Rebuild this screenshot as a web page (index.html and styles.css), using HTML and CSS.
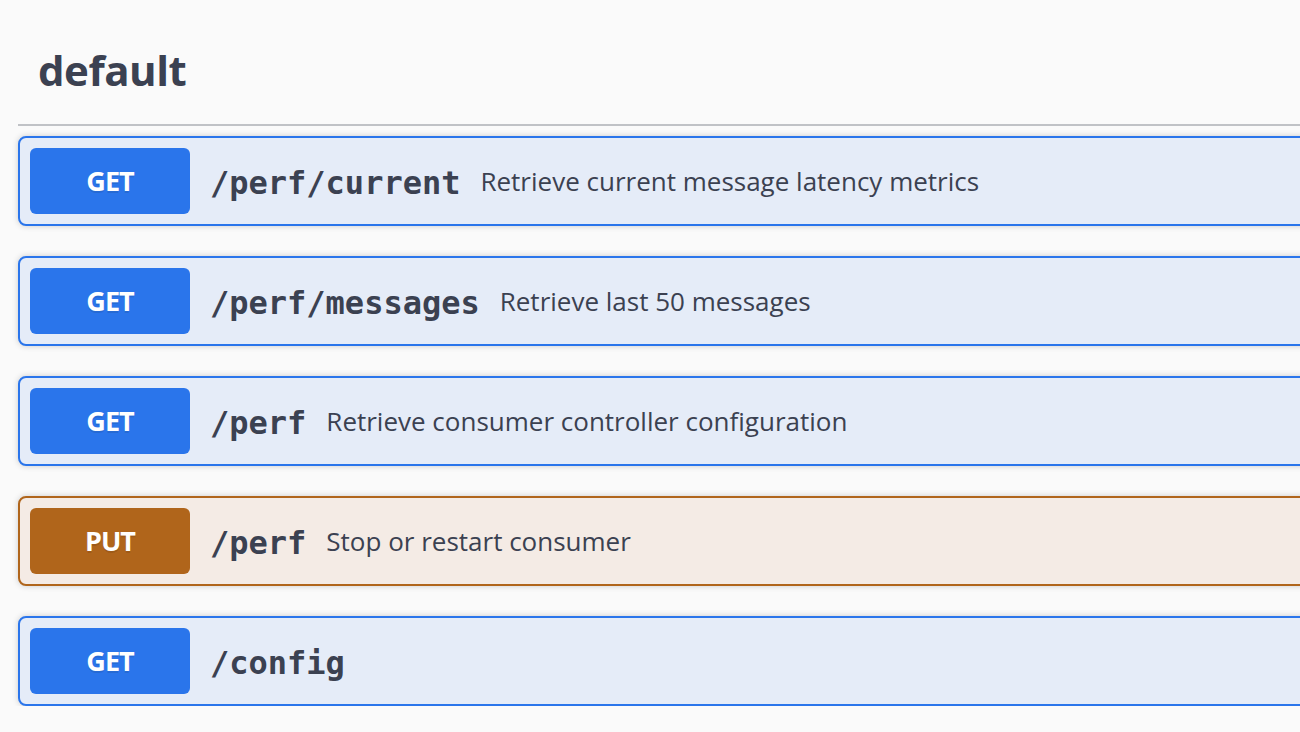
FILE: index.html
```html
<!DOCTYPE html>
<html>
<head>
<meta charset="utf-8">
<link rel="stylesheet" href="styles.css">
</head>
<body>
<div class="wrapper">
  <h3 class="tag">default</h3>
  <div class="ops">
    <div class="op get">
      <span class="method">GET</span>
      <span class="path">/perf/current</span>
      <span class="desc">Retrieve current message latency metrics</span>
    </div>
    <div class="op get">
      <span class="method">GET</span>
      <span class="path">/perf/messages</span>
      <span class="desc">Retrieve last 50 messages</span>
    </div>
    <div class="op get">
      <span class="method">GET</span>
      <span class="path">/perf</span>
      <span class="desc">Retrieve consumer controller configuration</span>
    </div>
    <div class="op put">
      <span class="method">PUT</span>
      <span class="path">/perf</span>
      <span class="desc">Stop or restart consumer</span>
    </div>
    <div class="op get">
      <span class="method">GET</span>
      <span class="path">/config</span>
    </div>
  </div>
</div>
</body>
</html>
```
FILE: styles.css
```css
html, body {
  margin: 0;
  padding: 0;
  background: #fafafa;
  overflow: hidden;
}
.wrapper {
  width: 1340px;
  padding: 18px 0 0 18px;
  color: #3b4151;
  font-family: "Open Sans", sans-serif;
}
.tag {
  margin: 0 0 10px 0;
  padding: 20px 20px 22px 20px;
  font-size: 42px;
  line-height: 64px;
  font-weight: 700;
  border-bottom: 2px solid rgba(59, 65, 81, 0.3);
  letter-spacing: -0.5px;
}
.ops {
  display: flex;
  flex-direction: column;
  gap: 30px;
}
.op {
  display: flex;
  align-items: center;
  padding: 10px;
  border: 2px solid;
  border-radius: 8px;
  box-shadow: 0 0 6px rgba(0, 0, 0, 0.19);
}
.op.get {
  background: #e5ecf8;
  border-color: #2a75eb;
}
.op.put {
  background: #f4ebe5;
  border-color: #b0651b;
}
.method {
  width: 160px;
  height: 66px;
  line-height: 66px;
  text-align: center;
  border-radius: 6px;
  color: #fff;
  font-size: 27px;
  font-weight: 700;
  letter-spacing: -1px;
  text-shadow: 0 2px 0 rgba(0, 0, 0, 0.1);
  flex-shrink: 0;
}
.get .method { background: #2a75eb; }
.put .method { background: #b0651b; }
.path {
  padding: 4px 20px 0 20px;
  font-family: "DejaVu Sans Mono", monospace;
  font-weight: 700;
  font-size: 32px;
  color: #3b4151;
}
.desc {
  font-size: 26px;
  color: #3b4151;
}
```
